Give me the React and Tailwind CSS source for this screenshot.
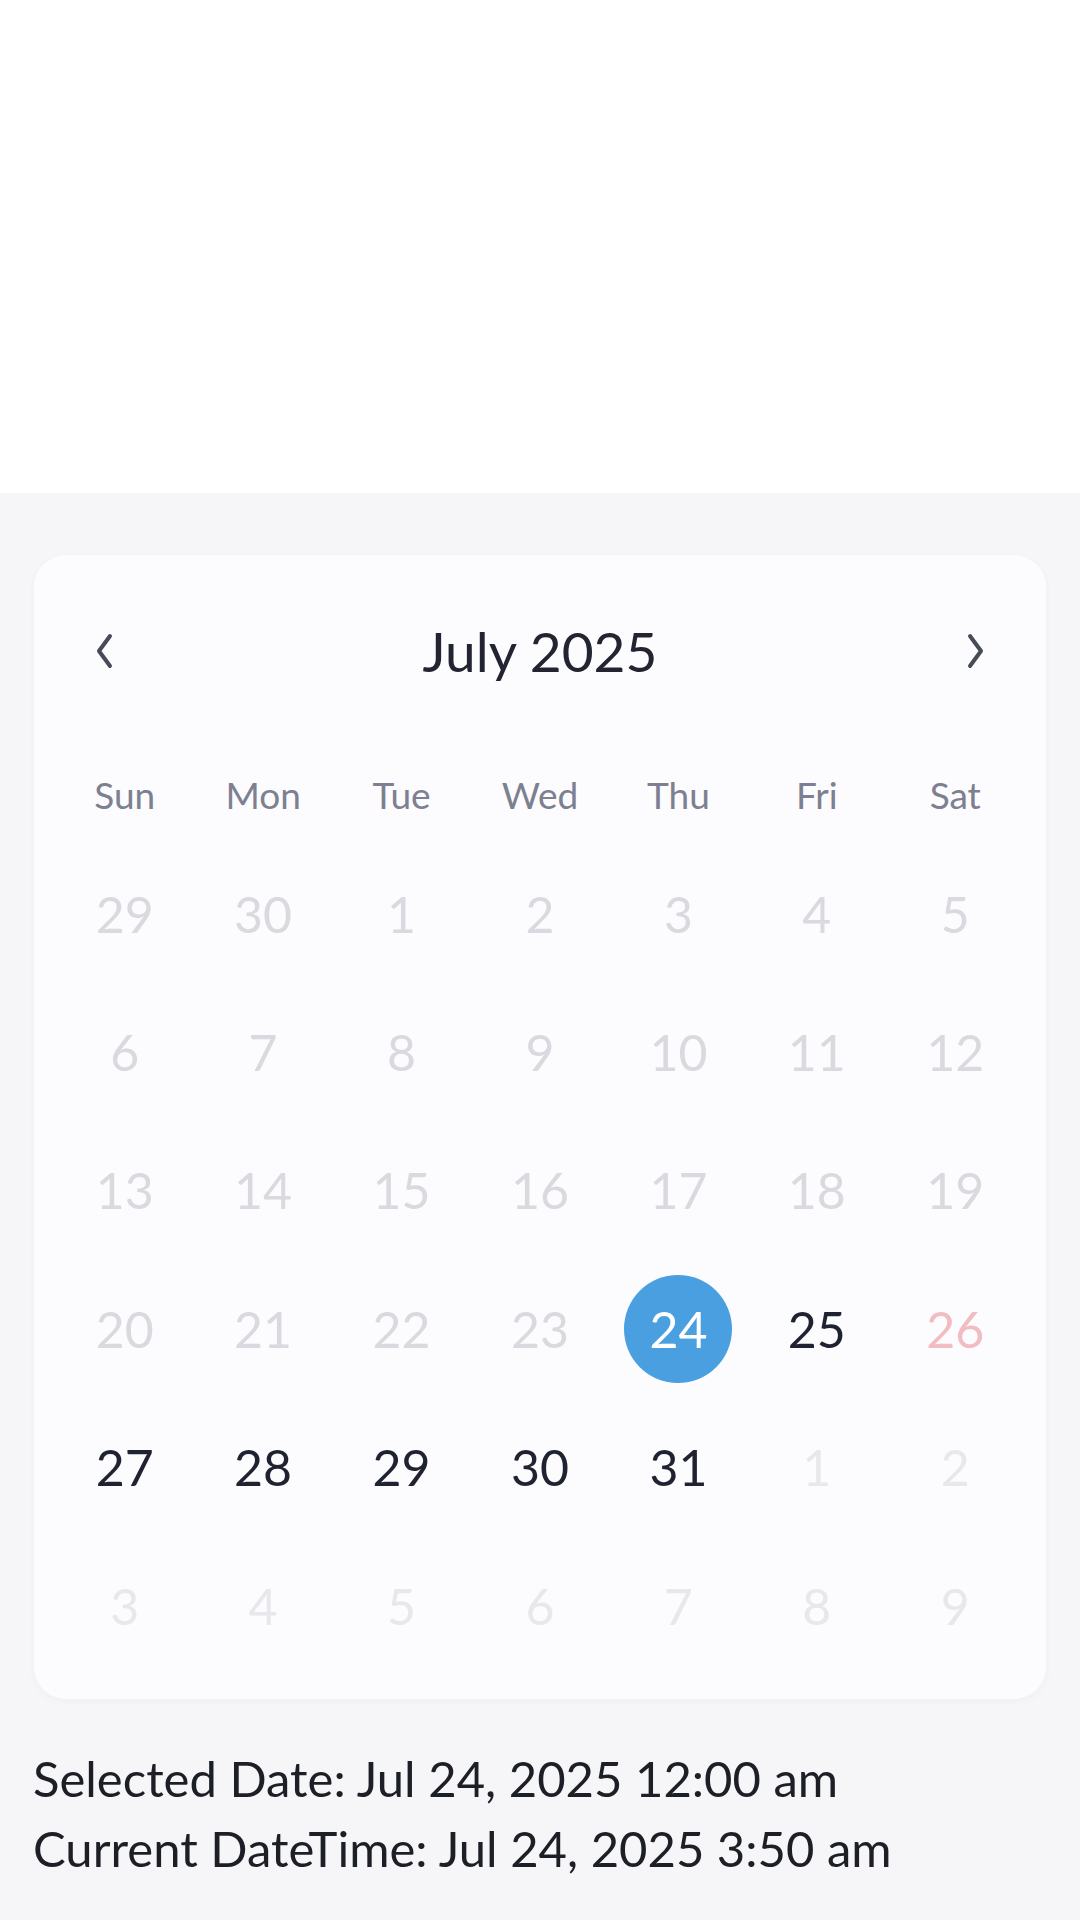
import React from 'react'

const weekdays = ['Sun', 'Mon', 'Tue', 'Wed', 'Thu', 'Fri', 'Sat']

// kind: past = earlier days of this month, out = other month, cur = upcoming, sel, sat
const days = [
  [29, 'past'], [30, 'past'], [1, 'past'], [2, 'past'], [3, 'past'], [4, 'past'], [5, 'past'],
  [6, 'past'], [7, 'past'], [8, 'past'], [9, 'past'], [10, 'past'], [11, 'past'], [12, 'past'],
  [13, 'past'], [14, 'past'], [15, 'past'], [16, 'past'], [17, 'past'], [18, 'past'], [19, 'past'],
  [20, 'past'], [21, 'past'], [22, 'past'], [23, 'past'], [24, 'sel'], [25, 'cur'], [26, 'sat'],
  [27, 'cur'], [28, 'cur'], [29, 'cur'], [30, 'cur'], [31, 'cur'], [1, 'out'], [2, 'out'],
  [3, 'out'], [4, 'out'], [5, 'out'], [6, 'out'], [7, 'out'], [8, 'out'], [9, 'out'],
]

const dayColor = {
  past: 'text-[#d9dadf]',
  out: 'text-[#e7e8eb]',
  cur: 'text-[#1f2230]',
  sat: 'text-[#f1bcc2]',
  sel: 'text-white',
}

const Chevron = ({ flip }) => (
  <svg width="20" height="36" viewBox="0 0 20 36" className={flip ? 'rotate-180' : ''}>
    <polyline points="15,3 4,18 15,33" fill="none" stroke="#474a57" strokeWidth="4" strokeLinecap="round" strokeLinejoin="round" />
  </svg>
)

export default function App() {
  return (
    <div className="w-[1080px] min-h-[1920px] flex flex-col bg-[#f6f5f8]" style={{ fontFamily: 'Lato, "Noto Sans", sans-serif' }}>
      <div className="h-[493px] bg-white" />
      <div className="flex-1 px-[34px] pt-[62px]">
        <div className="rounded-[32px] bg-[#fcfbfd] shadow-[0_2px_10px_rgba(0,0,0,0.03)] pt-[60px] pb-[24px]">
          <div className="flex items-center justify-between px-[61px] h-[72px]">
            <Chevron />
            <div className="text-[55px] text-[#222431] leading-none">July 2025</div>
            <Chevron flip />
          </div>
          <div className="w-[969px] mx-auto mt-[57px]">
            <div className="grid grid-cols-7 h-[101px] items-center">
              {weekdays.map((d) => (
                <div key={d} className="text-center text-[37px] text-[#7c8090]">{d}</div>
              ))}
            </div>
            <div className="grid grid-cols-7">
              {days.map(([n, kind], i) => (
                <div key={i} className="h-[138.4px] flex items-center justify-center">
                  <div className={`w-[108px] h-[108px] rounded-full flex items-center justify-center text-[50px] ${kind === 'sel' ? 'bg-[#4a9fe1]' : ''} ${dayColor[kind]}`}>
                    {n}
                  </div>
                </div>
              ))}
            </div>
          </div>
        </div>
        <div className="mt-[44px] text-[49px] leading-[70px] text-[#1d1f26] -ml-[1px]">
          <div>Selected Date: Jul 24, 2025 12:00 am</div>
          <div>Current DateTime: Jul 24, 2025 3:50 am</div>
        </div>
      </div>
    </div>
  )
}
